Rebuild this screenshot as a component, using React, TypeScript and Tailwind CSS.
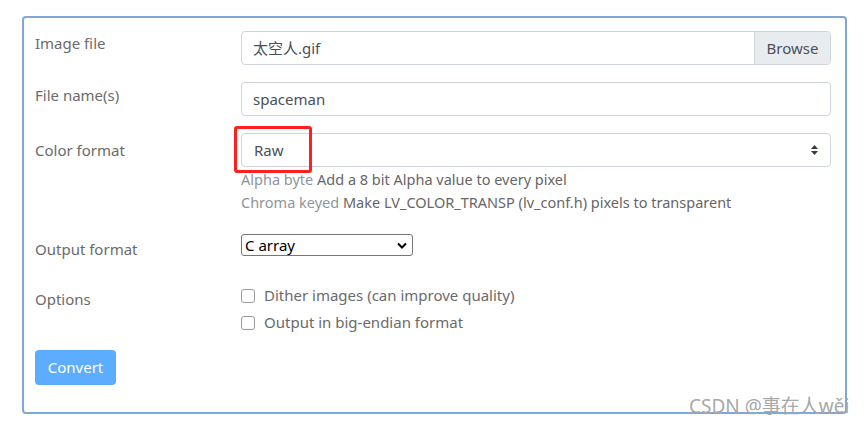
import React from "react";

const font = { fontFamily: '"Noto Sans", "Noto Sans CJK SC", sans-serif' };

function Label({ children, className = "" }: { children: React.ReactNode; className?: string }) {
  return (
    <div className={`w-[206px] shrink-0 text-[15px] leading-[24px] text-[#6b6b6b] ${className}`}>
      {children}
    </div>
  );
}

function Checkbox({ label }: { label: string }) {
  return (
    <label className="flex items-center gap-[9px] leading-[27px]">
      <input
        type="checkbox"
        className="h-[14px] w-[14px] appearance-none rounded-[3px] border border-[#9a9a9a] bg-white"
      />
      <span>{label}</span>
    </label>
  );
}

export default function App() {
  return (
    <div className="relative h-[426px] w-[864px] overflow-hidden bg-white" style={font}>
      <div className="ml-[22px] mt-[16px] h-[398px] w-[825px] rounded-[4px] border-2 border-[#7ea8d8] pl-[11px] pr-[14px] pt-[13px]">
        {/* Image file */}
        <div className="flex">
          <Label>Image file</Label>
          <div className="flex h-[34px] flex-1 overflow-hidden rounded-[4px] border border-[#ced4da]">
            <div className="flex flex-1 items-center pl-[11px] text-[15px] text-[#495057]">太空人.gif</div>
            <div className="flex w-[76px] items-center justify-center border-l border-[#ced4da] bg-[#e9ecef] text-[15px] text-[#495057]">
              Browse
            </div>
          </div>
        </div>

        {/* File name */}
        <div className="mt-[17px] flex">
          <Label className="pt-[1px]">File name(s)</Label>
          <div className="flex h-[34px] flex-1 items-center rounded-[4px] border border-[#ced4da] pl-[11px] text-[15px] text-[#495057]">
            spaceman
          </div>
        </div>

        {/* Color format */}
        <div className="mt-[17px] flex">
          <Label className="pt-[5px]">Color format</Label>
          <div className="flex-1">
            <div className="relative flex h-[34px] items-center rounded-[4px] border border-[#ced4da] pl-[12px] pr-[10px] text-[15px] text-[#495057]">
              <span className="flex-1">Raw</span>
              <svg width="9" height="12" viewBox="0 0 9 12" className="mr-[1px]">
                <path d="M4.5 1 L8 5 L1 5 Z" fill="#343a40" />
                <path d="M4.5 11 L8 7 L1 7 Z" fill="#343a40" />
              </svg>
              <div className="absolute left-[-8px] top-[-8px] h-[47px] w-[78px] rounded-[3px] border-[3px] border-[#ff1f1f]" />
            </div>
            <div className="mt-[1px] text-[14.5px] leading-[23px]">
              <div>
                <span className="text-[#8d959c]">Alpha byte</span>{" "}
                <span className="text-[#666666]">Add a 8 bit Alpha value to every pixel</span>
              </div>
              <div>
                <span className="text-[#8d959c]">Chroma keyed</span>{" "}
                <span className="text-[#666666]">Make LV_COLOR_TRANSP (lv_conf.h) pixels to transparent</span>
              </div>
            </div>
          </div>
        </div>

        {/* Output format */}
        <div className="mt-[20px] flex">
          <Label className="pt-[3px]">Output format</Label>
          <div className="flex-1">
            <div className="relative flex h-[22px] w-[172px] items-center rounded-[3px] border border-[#767676] pl-[3px] text-[15px] text-black">
              <span className="flex-1 leading-none">C array</span>
              <svg width="10" height="7" viewBox="0 0 10 7" className="mr-[5px]">
                <path d="M1 1.5 L5 5.5 L9 1.5" stroke="#000" strokeWidth="2" fill="none" />
              </svg>
            </div>
          </div>
        </div>

        {/* Options */}
        <div className="mt-[21px] flex">
          <Label className="pt-[5px]">Options</Label>
          <div className="flex-1 text-[15px] text-[#6b6b6b]">
            <Checkbox label="Dither images (can improve quality)" />
            <Checkbox label="Output in big-endian format" />
          </div>
        </div>

        <button
          type="button"
          className="mt-[14px] h-[35px] w-[81px] rounded-[4px] bg-[#5cacff] text-[15px] text-white"
        >
          Convert
        </button>
      </div>

      <div className="absolute left-[689px] top-[394px] text-[19px] leading-[24px] text-[#a8a8a8]">
        CSDN @事在人wěi
      </div>
    </div>
  );
}
